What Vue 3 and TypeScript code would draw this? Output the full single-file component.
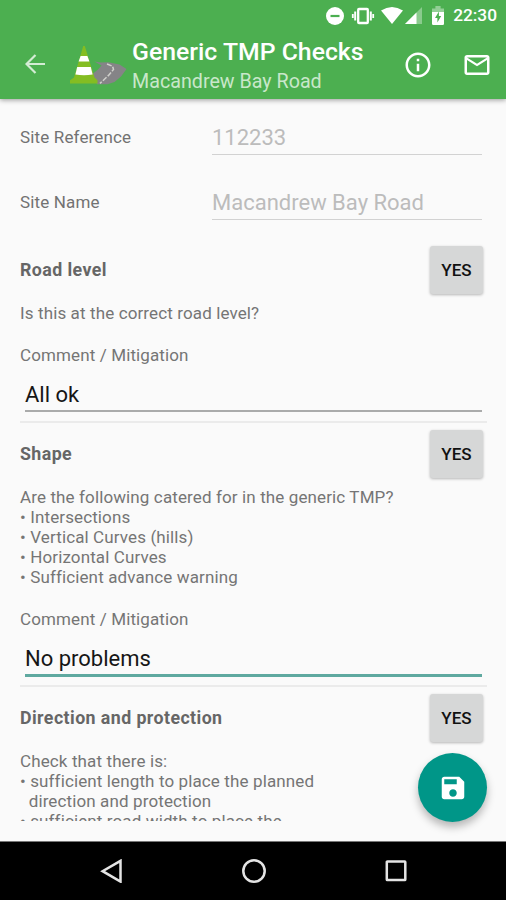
<script setup lang="ts">
import { ref } from 'vue'

interface Field {
  label: string
  value: string
}

interface Check {
  title: string
  lines: string[]
  comment: string
  focused: boolean
  answer: string
}

const siteFields: Field[] = [
  { label: 'Site Reference', value: '112233' },
  { label: 'Site Name', value: 'Macandrew Bay Road' },
]

const checks = ref<Check[]>([
  {
    title: 'Road level',
    lines: ['Is this at the correct road level?'],
    comment: 'All ok',
    focused: false,
    answer: 'YES',
  },
  {
    title: 'Shape',
    lines: [
      'Are the following catered for in the generic TMP?',
      '• Intersections',
      '• Vertical Curves (hills)',
      '• Horizontal Curves',
      '• Sufficient advance warning',
    ],
    comment: 'No problems',
    focused: true,
    answer: 'YES',
  },
  {
    title: 'Direction and protection',
    lines: [
      'Check that there is:',
      '• sufficient length to place the planned',
      '\u00a0 direction and protection',
      '• sufficient road width to place the',
    ],
    comment: '',
    focused: false,
    answer: 'YES',
  },
])

function toggle(check: Check): void {
  check.answer = check.answer === 'YES' ? 'NO' : 'YES'
}
</script>

<template>
  <div class="screen">
    <header class="top">
      <div class="status">
        <svg class="dnd" viewBox="0 0 18 18"><circle cx="9" cy="9" r="9" fill="#fff" /><path d="M4.500 9h9" stroke="#4caf50" stroke-width="2.200" /></svg>
        <svg class="vibrate" viewBox="0 0 24 18">
          <rect x="7.200" y="2" width="9.600" height="14" rx=".8" fill="none" stroke="#fff" stroke-width="2.300" />
          <path d="M4.200 4.500v9M19.800 4.500v9" stroke="#fff" stroke-width="2" />
          <path d="M1.800 7v4M22.200 7v4" stroke="#fff" stroke-width="1.800" />
        </svg>
        <svg class="wifi" viewBox="0 0 22 17"><path d="M0 3.600Q11-3.600 22 3.600L11 17z" fill="#fff" /></svg>
        <svg class="signal" viewBox="0 0 17 17"><path d="M17 0v17H0z" fill="#fff" opacity=".35" /><path d="M11.500 5.500V17H0z" fill="#fff" /></svg>
        <svg class="battery" viewBox="0 0 12 19">
          <path d="M0 2.600h3.400V0h5.200v2.600H12V6H0z" fill="#fff" opacity=".4" />
          <path d="M0 6h12v11.800q0 1.200-1.200 1.200H1.200Q0 19 0 17.800z" fill="#fff" />
          <path d="M6.900 5.500L3 12.100h2.400v4.400L9.200 10H6.900z" fill="#4caf50" />
        </svg>
        <span class="clock">22:30</span>
      </div>
      <div class="toolbar">
        <svg class="back" viewBox="0 0 20 20"><path d="M10.500 1L1.500 10l9 9M1.500 10H20" /></svg>
        <svg class="logo" viewBox="0 0 57 40">
          <path d="M24.500 16.500l6 .9 8-.2 11 2.200 7 4.600-5.500 7.500-6.500 5.500-7 2.300H27L22.500 29l5.500-4.500 3.500-4z" fill="#858487" />
          <path d="M37 19l5.500 2.200 1 3.200-5 6-8.500 8" fill="none" stroke="#d0d0cc" stroke-width="1.500" stroke-dasharray="5 1.600" />
          <path d="M13.200 1h1.600L24.500 32.500l3 2.700V38.500H0v-3.300l4-2.700z" fill="#84bd22" />
          <path d="M10.600 11h6.800l2 5.600H8.600z" fill="#fff" />
          <path d="M7.200 22h13.600l1.800 7.600q-8.600 1.400-17.200 0z" fill="#fff" />
        </svg>
        <div class="titles">
          <h1>Generic TMP Checks</h1>
          <p>Macandrew Bay Road</p>
        </div>
        <svg class="action" viewBox="0 0 24 24"><path d="M11 17h2v-6h-2v6zm1-15C6.480 2 2 6.480 2 12s4.480 10 10 10 10-4.480 10-10S17.520 2 12 2zm0 18c-4.410 0-8-3.590-8-8s3.590-8 8-8 8 3.590 8 8-3.590 8-8 8zM11 9h2V7h-2v2z" /></svg>
        <svg class="action" viewBox="0 0 24 24"><path d="M20 4H4c-1.100 0-1.990.9-1.990 2L2 18c0 1.100.9 2 2 2h16c1.100 0 2-.9 2-2V6c0-1.100-.9-2-2-2zm0 14H4V8l8 5 8-5v10zm-8-7L4 6h16l-8 5z" /></svg>
      </div>
    </header>

    <main class="form">
      <div v-for="f in siteFields" :key="f.label" class="site-row">
        <span class="site-label">{{ f.label }}</span>
        <div class="site-value">{{ f.value }}</div>
      </div>

      <section v-for="c in checks" :key="c.title" class="check">
        <div class="check-head">
          <h2>{{ c.title }}</h2>
          <button type="button" @click="toggle(c)">{{ c.answer }}</button>
        </div>
        <p v-for="line in c.lines" :key="line" class="line">{{ line }}</p>
        <template v-if="c.comment">
          <p class="line comment-label">Comment / Mitigation</p>
          <div class="comment" :class="{ focused: c.focused }">{{ c.comment }}</div>
          <div class="divider"></div>
        </template>
      </section>
    </main>

    <div class="fab">
      <svg viewBox="0 0 24 24"><path d="M17 3H5c-1.110 0-2 .9-2 2v14c0 1.100.89 2 2 2h14c1.100 0 2-.9 2-2V7l-4-4zm-5 16c-1.660 0-3-1.340-3-3s1.340-3 3-3 3 1.340 3 3-1.340 3-3 3zm3-10H5V5h10v4z" /></svg>
    </div>

    <nav class="navbar">
      <svg viewBox="0 0 24 24"><path d="M20.500 1.800v20.800L2.600 12.200z" /></svg>
      <svg viewBox="0 0 24 24"><circle cx="12" cy="12" r="10.700" /></svg>
      <svg viewBox="0 0 24 24"><rect x="2.800" y="2.500" width="18.500" height="18.500" rx=".6" /></svg>
    </nav>
  </div>
</template>

<style>
body {
  margin: 0;
  background: #fafafa;
}
</style>

<style scoped>
.screen {
  position: relative;
  display: flex;
  flex-direction: column;
  width: 506px;
  height: 900px;
  overflow: hidden;
  background: #fafafa;
  font-family: Roboto, "Liberation Sans", sans-serif;
}
h1, h2, p {
  margin: 0;
}
svg {
  display: block;
  flex: none;
}
.top {
  flex: none;
  height: 99px;
  background: #4caf50;
  box-shadow: 0 1px 5px rgba(0, 0, 0, 0.4);
}
.status {
  display: flex;
  align-items: center;
  justify-content: flex-end;
  height: 31px;
  padding-right: 9px;
}
.dnd { width: 18px; height: 18px; margin-right: 7px; }
.vibrate { width: 24px; height: 18px; margin-right: 6px; }
.wifi { width: 22px; height: 17px; margin-right: 2px; }
.signal { width: 17px; height: 17px; margin-right: 10px; }
.battery { width: 12px; height: 19px; margin-right: 9px; }
.clock {
  color: #fff;
  font-size: 17.300px;
  font-weight: 500;
  line-height: 33px;
}
.toolbar {
  display: flex;
  align-items: center;
  height: 68px;
  padding: 0 14px 0 25px;
}
.back {
  width: 20px;
  height: 20px;
  margin: 0 25px 2px 0;
  fill: none;
  stroke: #d3ecd4;
  stroke-width: 2.200;
}
.logo {
  width: 57px;
  height: 40px;
  margin-right: 5px;
}
.titles {
  flex: 1;
  padding-top: 3px;
  white-space: nowrap;
}
.titles h1 {
  color: #fff;
  font-size: 24.800px;
  font-weight: 500;
  line-height: 30px;
}
.titles p {
  color: #c9e7ca;
  font-size: 19.700px;
  line-height: 29px;
}
.action {
  width: 30px;
  height: 30px;
  fill: #fff;
}
.action + .action {
  margin-left: 29px;
}
.form {
  flex: none;
  height: 715px;
  margin-top: 7px;
  padding: 0 19px 0 20px;
  overflow: hidden;
}
.site-row {
  display: flex;
  align-items: flex-start;
  height: 65px;
  padding-right: 5px;
}
.site-label {
  width: 192px;
  color: #727272;
  font-size: 17px;
  letter-spacing: 0.150px;
  line-height: 63px;
}
.site-value {
  flex: 1;
  box-sizing: border-box;
  height: 49px;
  padding-top: 18px;
  border-bottom: 1px solid #d2d2d2;
  color: #bcbcbc;
  font-size: 22px;
  line-height: 27px;
}
.check:first-of-type {
  padding-top: 3px;
}
.check-head {
  display: flex;
  align-items: center;
  justify-content: space-between;
  height: 62px;
  margin-bottom: 2px;
  padding-right: 4px;
}
.check-head h2 {
  color: #666;
  font-size: 17.800px;
  font-weight: 700;
  letter-spacing: 0.420px;
  line-height: 20px;
}
.check-head button {
  width: 53px;
  height: 48px;
  padding: 0;
  border: 0;
  border-radius: 3px;
  background: #d6d7d7;
  box-shadow: 0 1px 3px rgba(0, 0, 0, 0.280);
  color: #111;
  font-family: inherit;
  font-size: 17px;
  font-weight: 500;
}
.line {
  height: 20px;
  color: #757575;
  font-size: 17px;
  letter-spacing: 0.120px;
  line-height: 20px;
  white-space: pre;
}
.comment-label {
  margin-top: 22px;
}
.comment {
  box-sizing: border-box;
  height: 47px;
  margin: 0 5px 9px;
  padding-top: 16px;
  border-bottom: 2px solid #aaabab;
  color: #161616;
  font-size: 22px;
  line-height: 28px;
}
.comment.focused {
  height: 48px;
  margin-bottom: 8px;
  border-bottom: 3px solid #5fa9a0;
}
.divider {
  height: 2px;
  background: #ebebeb;
}
.fab {
  position: absolute;
  left: 418px;
  top: 753px;
  display: flex;
  align-items: center;
  justify-content: center;
  width: 69px;
  height: 69px;
  border-radius: 50%;
  background: #009688;
  box-shadow: 0 5px 9px rgba(0, 0, 0, 0.280);
}
.fab svg {
  width: 30px;
  height: 30px;
  fill: #fff;
}
.navbar {
  display: flex;
  align-items: center;
  justify-content: space-between;
  box-sizing: border-box;
  height: 59px;
  margin-top: auto;
  padding: 0 98px 0 100px;
  border-top: 1px solid #777;
  background: #000;
}
.navbar svg {
  width: 24px;
  height: 24px;
  fill: none;
  stroke: #e4e4e4;
  stroke-width: 2.500;
}
</style>
